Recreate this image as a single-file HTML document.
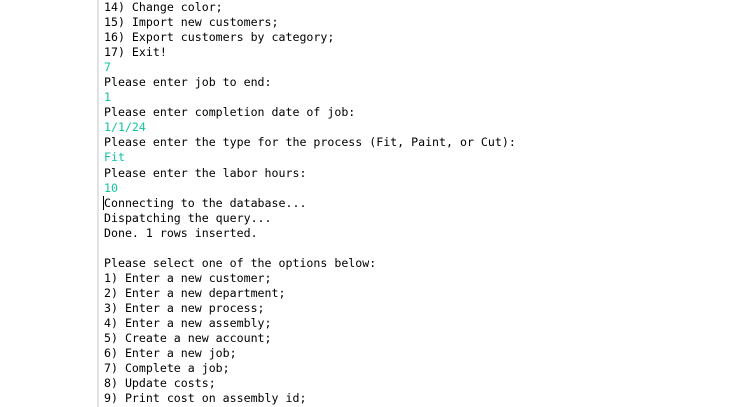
<!DOCTYPE html><html><head><style>
html,body{margin:0;width:740px;height:407px;background:#fff;overflow:hidden}
.b{position:absolute;left:97px;top:0;width:2px;height:407px;background:#e3e3e3}
pre{position:absolute;left:104px;top:0;margin:0;font-family:"DejaVu Sans Mono","Liberation Mono",monospace;font-size:11.6px;line-height:15.05px;color:#000}
.g{color:#11c4a0}
.c{position:absolute;left:103px;top:196px;width:1px;height:14px;background:#000}
</style></head><body><div class="b"></div><pre>14) Change color;
15) Import new customers;
16) Export customers by category;
17) Exit!
<span class="g">7</span>
Please enter job to end:
<span class="g">1</span>
Please enter completion date of job:
<span class="g">1/1/24</span>
Please enter the type for the process (Fit, Paint, or Cut):
<span class="g">Fit</span>
Please enter the labor hours:
<span class="g">10</span>
Connecting to the database...
Dispatching the query...
Done. 1 rows inserted.

Please select one of the options below:
1) Enter a new customer;
2) Enter a new department;
3) Enter a new process;
4) Enter a new assembly;
5) Create a new account;
6) Enter a new job;
7) Complete a job;
8) Update costs;
9) Print cost on assembly id;
</pre><div class="c"></div></body></html>
